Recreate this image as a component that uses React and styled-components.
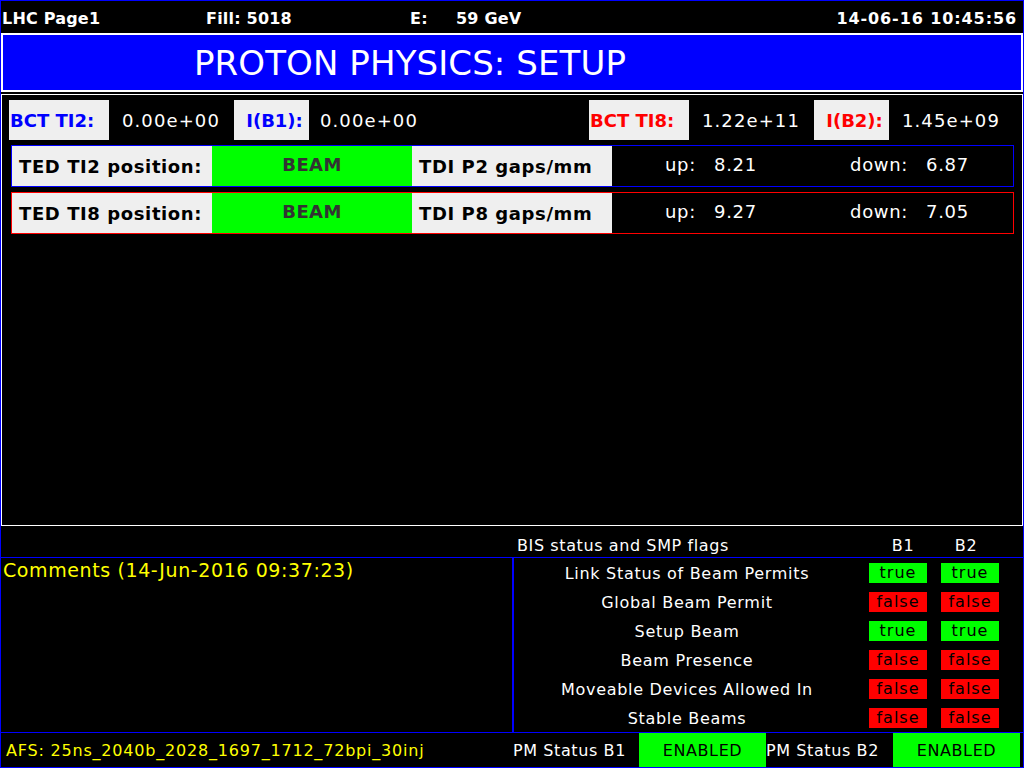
import React from 'react';
import styled, { createGlobalStyle } from 'styled-components';

// kolory ekranu LHC
const BLUE = '#0000ff';
const GREEN = '#00ff00';
const RED = '#ff0000';
const GREY = '#efefef';
const YELLOW = '#ffff00';

const GlobalStyle = createGlobalStyle`
    html, body { margin: 0; padding: 0; background: #000; }
    body { font-family: "DejaVu Sans", Verdana, sans-serif; }
    * { box-sizing: border-box; }
`;

const Screen = styled.div`
    width: 1024px;
    height: 768px;
    background: #000;
    border: 1px solid ${BLUE};
    display: flex;
    flex-direction: column;
    color: #fff;
    overflow: hidden;
`;

const TopBar = styled.div`
    height: 32px;
    flex: none;
    display: flex;
    align-items: center;
    padding: 2px 6px 0 1px;
    font-weight: bold;
    font-size: 16px;
    white-space: nowrap;
`;

const TopItem = styled.span`
    width: ${p => p.$w}px;
    flex: none;
    letter-spacing: 0.2px;
`;

const TopDate = styled.span`
    margin-left: auto;
    letter-spacing: 0.9px;
`;

const TitleBox = styled.div`
    height: 59px;
    flex: none;
    border: 2px solid #fff;
    background: ${BLUE};
    display: flex;
    align-items: center;
    padding-left: 191px;
    font-size: 34px;
    letter-spacing: 0.1px;
`;

const MainPanel = styled.div`
    height: 432px;
    flex: none;
    margin-top: 2px;
    border: 1px solid #fff;
`;

const BctRow = styled.div`
    display: flex;
    height: 40px;
    margin-top: 5px;
    padding-left: 7px;
`;

const BctLabel = styled.div`
    width: ${p => p.$w}px;
    flex: none;
    background: ${GREY};
    color: ${p => p.$color};
    font-weight: bold;
    font-size: 18px;
    display: flex;
    align-items: center;
    justify-content: ${p => (p.$center ? 'center' : 'flex-start')};
    padding-left: ${p => (p.$center ? 6 : 1)}px;
    white-space: nowrap;
`;

const BctValue = styled.div`
    width: ${p => p.$w}px;
    flex: none;
    padding-left: ${p => p.$pad}px;
    display: flex;
    align-items: center;
    font-size: 18px;
    letter-spacing: 1.1px;
    white-space: nowrap;
`;

const TedRow = styled.div`
    display: flex;
    width: 1003px;
    height: 42px;
    margin: 5px 0 0 9px;
    border: 1px solid ${p => p.$color};
`;

const TedCell = styled.div`
    width: 200px;
    flex: none;
    background: ${p => p.$bg};
    color: ${p => p.$fg || '#000'};
    font-weight: bold;
    font-size: 18px;
    letter-spacing: ${p => (p.$center ? 0.4 : 0.6)}px;
    display: flex;
    align-items: center;
    justify-content: ${p => (p.$center ? 'center' : 'flex-start')};
    padding-left: ${p => (p.$center ? 0 : 7)}px;
    padding-bottom: ${p => (p.$center ? 3 : 0)}px;
    white-space: nowrap;
`;

const GapBox = styled.div`
    flex: 1;
    display: flex;
    align-items: center;
    padding: 0 0 4px 53px;
    font-size: 18px;
    letter-spacing: 0.7px;
    white-space: nowrap;
`;

const GapText = styled.span`
    width: ${p => p.$w}px;
    flex: none;
`;

const FlagsHeader = styled.div`
    height: 31px;
    flex: none;
    display: flex;
    padding-top: 10px;
    font-size: 16px;
    letter-spacing: 0.6px;
    line-height: 20px;
    white-space: nowrap;
`;

const HeaderTitle = styled.span`
    width: 873px;
    flex: none;
    padding-left: 516px;
`;

const HeaderBeam = styled.span`
    width: 58px;
    flex: none;
    text-align: center;
    margin-right: 5px;
`;

const BottomPanel = styled.div`
    height: 175px;
    flex: none;
    border-top: 1px solid ${BLUE};
    display: flex;
`;

const Comments = styled.div`
    width: 511px;
    flex: none;
    padding: 1px 0 0 2px;
    color: ${YELLOW};
    font-size: 19px;
    letter-spacing: 0.6px;
    line-height: 22px;
    white-space: nowrap;
`;

const FlagsBox = styled.div`
    flex: 1;
    border-left: 2px solid ${BLUE};
    display: grid;
    grid-template-rows: repeat(6, 29px);
`;

const FlagRow = styled.div`
    display: flex;
    align-items: center;
    padding-top: 1px;
`;

const FlagLabel = styled.span`
    width: 346px;
    flex: none;
    text-align: center;
    font-size: 16px;
    letter-spacing: 0.7px;
    white-space: nowrap;
`;

const Badge = styled.span`
    width: 58px;
    height: 20px;
    flex: none;
    margin-left: ${p => p.$ml}px;
    background: ${p => (p.$on ? GREEN : RED)};
    color: #000;
    font-size: 16px;
    letter-spacing: 1px;
    line-height: 20px;
    text-align: center;
`;

const Footer = styled.div`
    flex: 1;
    border-top: 1px solid ${BLUE};
    display: flex;
    font-size: 16px;
    letter-spacing: 0.6px;
    white-space: nowrap;
`;

const FooterCell = styled.div`
    width: ${p => p.$w}px;
    flex: none;
    display: flex;
    align-items: center;
    justify-content: ${p => (p.$center ? 'center' : 'flex-start')};
    padding-left: ${p => p.$pad || 0}px;
    padding-top: 1px;
    background: ${p => p.$bg || 'transparent'};
    color: ${p => p.$fg || '#fff'};
`;

const AfsText = styled.span`
    letter-spacing: 0.8px;
`;

const flags = [
    { label: 'Link Status of Beam Permits', b1: true, b2: true },
    { label: 'Global Beam Permit', b1: false, b2: false },
    { label: 'Setup Beam', b1: true, b2: true },
    { label: 'Beam Presence', b1: false, b2: false },
    { label: 'Moveable Devices Allowed In', b1: false, b2: false },
    { label: 'Stable Beams', b1: false, b2: false },
];

const teds = [
    { name: 'TED TI2 position:', tdi: 'TDI P2 gaps/mm', up: '8.21', down: '6.87', color: BLUE },
    { name: 'TED TI8 position:', tdi: 'TDI P8 gaps/mm', up: '9.27', down: '7.05', color: RED },
];

const App = () => {
    return (
        <Screen>
            <GlobalStyle />
            <TopBar>
                <TopItem $w={204}>LHC Page1</TopItem>
                <TopItem $w={204}>Fill: 5018</TopItem>
                <TopItem $w={46}>E:</TopItem>
                <TopItem $w={100}>59 GeV</TopItem>
                <TopDate>14-06-16 10:45:56</TopDate>
            </TopBar>

            <TitleBox>PROTON PHYSICS: SETUP</TitleBox>

            <MainPanel>
                <BctRow>
                    <BctLabel $w={100} $color={BLUE}>BCT TI2:</BctLabel>
                    <BctValue $w={125} $pad={13}>0.00e+00</BctValue>
                    <BctLabel $w={75} $color={BLUE} $center>I(B1):</BctLabel>
                    <BctValue $w={280} $pad={11}>0.00e+00</BctValue>
                    <BctLabel $w={100} $color={RED}>BCT TI8:</BctLabel>
                    <BctValue $w={125} $pad={13}>1.22e+11</BctValue>
                    <BctLabel $w={75} $color={RED} $center>I(B2):</BctLabel>
                    <BctValue $w={120} $pad={13}>1.45e+09</BctValue>
                </BctRow>

                {teds.map(t => (
                    <TedRow key={t.name} $color={t.color}>
                        <TedCell $bg={GREY}>{t.name}</TedCell>
                        <TedCell $bg={GREEN} $fg="#333" $center>BEAM</TedCell>
                        <TedCell $bg={GREY}>{t.tdi}</TedCell>
                        <GapBox>
                            <GapText $w={49}>up:</GapText>
                            <GapText $w={136}>{t.up}</GapText>
                            <GapText $w={76}>down:</GapText>
                            <GapText $w={60}>{t.down}</GapText>
                        </GapBox>
                    </TedRow>
                ))}
            </MainPanel>

            <FlagsHeader>
                <HeaderTitle>BIS status and SMP flags</HeaderTitle>
                <HeaderBeam>B1</HeaderBeam>
                <HeaderBeam>B2</HeaderBeam>
            </FlagsHeader>

            <BottomPanel>
                <Comments>Comments (14-Jun-2016 09:37:23)</Comments>
                <FlagsBox>
                    {flags.map(f => (
                        <FlagRow key={f.label}>
                            <FlagLabel>{f.label}</FlagLabel>
                            <Badge $ml={9} $on={f.b1}>{f.b1 ? 'true' : 'false'}</Badge>
                            <Badge $ml={14} $on={f.b2}>{f.b2 ? 'true' : 'false'}</Badge>
                        </FlagRow>
                    ))}
                </FlagsBox>
            </BottomPanel>

            <Footer>
                <FooterCell $w={512} $pad={5} $fg={YELLOW}>
                    <AfsText>AFS: 25ns_2040b_2028_1697_1712_72bpi_30inj</AfsText>
                </FooterCell>
                <FooterCell $w={126}>PM Status B1</FooterCell>
                <FooterCell $w={127} $bg={GREEN} $fg="#000" $center>ENABLED</FooterCell>
                <FooterCell $w={127}>PM Status B2</FooterCell>
                <FooterCell $w={127} $bg={GREEN} $fg="#000" $center>ENABLED</FooterCell>
            </Footer>
        </Screen>
    );
};

export default App;
